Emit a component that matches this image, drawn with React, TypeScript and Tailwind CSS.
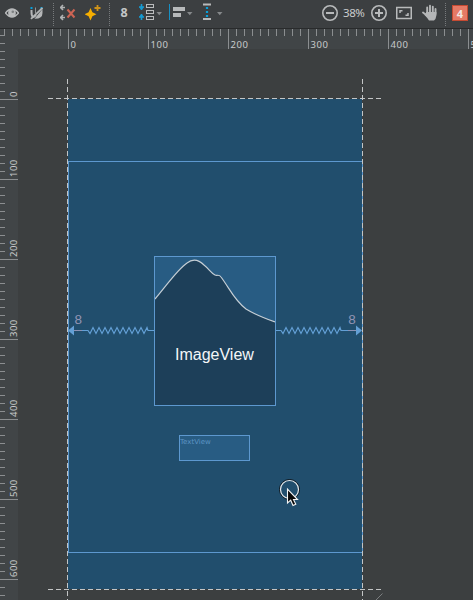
import React from "react";

const TOP_TICKS = Array.from({ length: 59 }, (_, i) => 4 + i * 8);
const LEFT_TICKS = Array.from({ length: 71 }, (_, i) => 2 + i * 8);

function Icon({ w, className = "", children }: { w: number; className?: string; children: React.ReactNode }) {
  return (
    <svg width={w} height={28} viewBox={`0 0 ${w} 28`} fill="none" className={`block shrink-0 ${className}`}>
      {children}
    </svg>
  );
}

function Separator({ className = "" }: { className?: string }) {
  return (
    <Icon w={1} className={className}>
      <path d="M.5 3V26" stroke="#777a7c" strokeDasharray="1 1" />
    </Icon>
  );
}

function Toolbar() {
  return (
    <header className="flex h-[28px] shrink-0 items-start bg-[#3c3f41] pl-[5px]">
      <Icon w={14}>
        <path d="M.5 13Q7 5 13.5 13Q7 21 .5 13Z" stroke="#b8babb" strokeWidth="1.5" />
        <circle cx="7" cy="13" r="3.9" fill="#b8babb" />
        <circle cx="7.8" cy="11.8" r="1.3" fill="#7d8082" />
      </Icon>
      <Icon w={14} className="ml-[11px]">
        <path d="M1.5 7V9M11.5 7V9" stroke="#06a0dc" strokeWidth="2" />
        <path d="M1.5 10V12C1.5 17 3.5 18.5 6 15" stroke="#b4b6b7" strokeWidth="2" />
        <path d="M12.5 9V13Q12.5 19 4.5 18.8Z" fill="#b4b6b7" />
        <path d="M1 18.8L12.5 7.8" stroke="#b4b6b7" strokeWidth="1.8" />
        <path d="M5.5 7.5V14" stroke="#909395" />
      </Icon>
      <Separator className="ml-[9px]" />
      <Icon w={16} className="ml-[6px]">
        <path d="M0 7.5H5M3 5L.7 7.5L3 10M0 17.5H5M3 15L.7 17.5L3 20" stroke="#b0b2b3" strokeWidth="1.6" />
        <path d="M7.5 9.5L14.5 17.5M14.5 9.5L7.5 17.5" stroke="#cc6454" strokeWidth="2" />
      </Icon>
      <Icon w={16} className="ml-[9px]">
        <path d="M5.5 8L7.4 12.3L11.5 14.3L7.4 16.2L5.5 20.5L3.6 16.2L-.5 14.3L3.6 12.3Z" fill="#f6ae00" />
        <path d="M12.5 5V11M9.5 8H15.5" stroke="#ce931a" strokeWidth="1.8" />
      </Icon>
      <Separator className="ml-[8px]" />
      <span className="ml-[10.5px] w-[9.5px] font-['Noto_Sans',sans-serif] text-[12.5px] leading-[26px] font-bold text-[#c4c6c7]">8</span>
      <Icon w={23} className="ml-[9px]">
        <path d="M2.5 4V10M0 7H5M2.5 14V20M0 17H5" stroke="#169bd2" strokeWidth="1.6" />
        <path d="M0 7.3L2.5 10L5 7.3M0 16.7L2.5 14L5 16.7" fill="#169bd2" />
        <rect x="7.5" y="4.5" width="7" height="3" stroke="#babcbd" />
        <rect x="7.5" y="10.5" width="7" height="3" stroke="#babcbd" />
        <rect x="7.5" y="16.5" width="7" height="3" stroke="#babcbd" />
        <path d="M17.5 12H23L20.25 15.3Z" fill="#85888a" />
      </Icon>
      <Icon w={24} className="ml-[7px]">
        <path d="M.5 4V20" stroke="#1690c4" />
        <path d="M4 7H16V11H4ZM4 13H12V17H4Z" fill="#b7b9ba" />
        <path d="M18 12H23.5L20.75 15.3Z" fill="#85888a" />
      </Icon>
      <Icon w={21} className="ml-[10px]">
        <path d="M0 4.5H8M0 19H8" stroke="#b7b9ba" strokeWidth="1.8" />
        <path d="M4 7V9M4 11V13M4 15V17" stroke="#06a0dc" strokeWidth="2.2" />
        <path d="M14 12H19.5L16.75 15.3Z" fill="#85888a" />
      </Icon>
      <div className="flex-1" />
      <Icon w={16}>
        <circle cx="8" cy="13" r="7.2" stroke="#b8babb" strokeWidth="1.6" />
        <path d="M4 13H12" stroke="#b8babb" strokeWidth="2" />
      </Icon>
      <span className="ml-[5px] w-[24px] font-['Noto_Sans',sans-serif] text-[11.5px] leading-[26px] tracking-[-0.45px] whitespace-nowrap text-[#cacccd]">38%</span>
      <Icon w={16} className="ml-[4px]">
        <circle cx="8" cy="13" r="7.2" stroke="#b8babb" strokeWidth="1.6" />
        <path d="M4 13H12M8 9V17" stroke="#b8babb" strokeWidth="2" />
      </Icon>
      <Icon w={16} className="ml-[9px]">
        <rect x=".75" y="7.5" width="14.5" height="11" stroke="#b8babb" strokeWidth="1.5" />
        <path d="M4 13V10.7H6.5M9.5 15.3H12V13" stroke="#b8babb" strokeWidth="1.5" />
      </Icon>
      <Icon w={16} className="ml-[10px]">
        <path d="M1 12.5L5.5 16M5.2 14V7.5M8 13V5.8M10.8 13V6.8M13.5 14V9" stroke="#b4b6b7" strokeWidth="1.9" strokeLinecap="round" />
        <path d="M4.3 12H14.4V15.5Q14 19 12 20.5H7Q6 18.5 2.5 15Z" fill="#b4b6b7" />
      </Icon>
      <Separator className="ml-[7px]" />
      <div className="mt-[5px] mr-[5px] ml-[6px] flex size-[16px] items-center justify-center border border-[#c54a32] bg-[#e57a66] font-['Noto_Sans',sans-serif] text-[11px] leading-none font-bold text-[#f3e8e5]">4</div>
    </header>
  );
}

function TopRuler() {
  return (
    <svg width="473" height="21" className="block shrink-0 overflow-visible bg-[#414547]">
      <rect width="473" height="1" fill="#292b2c" />
      <g fill="#8b8e90">
        {TOP_TICKS.map((x) => (
          <rect key={x} x={x} y={1} width={1} height={x >= 68 && (x - 68) % 80 === 0 ? 20 : 7} />
        ))}
        <rect y="7" width="5" height="1" />
        <rect y="15" width="5" height="1" />
      </g>
      <g fill="#c8cacb" className="font-['Noto_Sans',sans-serif] text-[9.5px] tracking-[0.55px]">
        {["0", "100", "200", "300", "400", "5"].map((n, i) => (
          <text key={n} x={70.5 + i * 80} y={20}>{n}</text>
        ))}
      </g>
    </svg>
  );
}

function LeftRuler() {
  return (
    <svg width="18" height="551" className="block shrink-0 overflow-visible bg-[#414547]">
      <g fill="#8b8e90">
        {LEFT_TICKS.map((y) => (
          <rect key={y} x={0} y={y} width={(y - 50) % 80 === 0 ? 18 : 5} height={1} />
        ))}
      </g>
      <g fill="#c8cacb" className="font-['Noto_Sans',sans-serif] text-[9.5px] tracking-[0.5px]">
        {[0, 100, 200, 300, 400, 500, 600].map((n) => (
          <text key={n} transform={`translate(17 ${48 + n * 0.8}) rotate(-90)`}>{n}</text>
        ))}
      </g>
    </svg>
  );
}

const ZIGZAG = "l2 3l3 -6l3 6l3 -6l3 6l3 -6l3 6l3 -6l3 6l3 -6l3 6l3 -6l3 6l3 -6l3 6l3 -6l3 6l3 -6l3 6l3 -6l1 3";

function Surface() {
  return (
    <main className="relative flex-1 overflow-hidden bg-[#3c3f40]">
      <div className="absolute top-[50px] left-[50px] h-[490px] w-[294px] bg-[#214e6d]" />
      <div className="absolute top-[112px] left-[50px] h-[392px] w-[295px] border border-[#5d98cf]" />
      <div className="absolute top-[207px] left-[136px] h-[150px] w-[122px] border border-[#5d98cf] bg-[#285c83]">
        <svg width="120" height="148" className="block">
          <path
            d="M0 42C12 28 22 13 32 6C37 2 43 2 49 8C54 12 56 16 60 18C62 19 64 17 66 20C75 32 79 43 91 52C99 57 109 61 120 65V148H0Z"
            fill="#1d3f59"
          />
          <path
            d="M0 42C12 28 22 13 32 6C37 2 43 2 49 8C54 12 56 16 60 18C62 19 64 17 66 20C75 32 79 43 91 52C99 57 109 61 120 65"
            fill="none"
            stroke="#c5ced5"
            strokeWidth="1.2"
          />
        </svg>
        <span className="absolute top-[88px] left-[20px] font-['Liberation_Sans',sans-serif] text-[16px] leading-[20px] text-[#f4f6f8]">ImageView</span>
      </div>
      <div className="absolute top-[386px] left-[161px] h-[26px] w-[71px] border border-[#5d98cf] bg-[#285c83]">
        <span className="block pt-[1.5px] font-['DejaVu_Sans',sans-serif] text-[7px] leading-[9px] text-[#5c94c3]">TextView</span>
      </div>
      <svg width="455" height="551" viewBox="18 49 455 551" fill="none" className="absolute inset-0">
        <g stroke="#c3c5c6" strokeDasharray="5 3">
          <path d="M67.5 79V600" />
          <path d="M362.5 79V600" />
          <path d="M48 98.5H381" />
          <path d="M48 589.5H381" />
        </g>
        <path d="M376 600L382.5 593.5" stroke="#7b7e80" />
        <g stroke="#639fd5" strokeWidth="1.2">
          <path d={`M74 330.5H88${ZIGZAG}H154`} />
          <path d={`M276 330.5H281${ZIGZAG}H356`} />
        </g>
        <path d="M68 330.5L74 325.5V335.5ZM362 330.5L356 325.5V335.5Z" fill="#639fd5" />
        <path d="M74 330.5H82M348 330.5H356" stroke="#8b92b6" />
        <g fill="#9294b4" className="font-['Liberation_Sans',sans-serif] text-[13.5px]">
          <text x="74.5" y="324">8</text>
          <text x="348.3" y="324">8</text>
        </g>
        <circle cx="289.5" cy="489.5" r="10" stroke="#10171d" />
        <circle cx="289.5" cy="489.5" r="9" stroke="#e6e9eb" strokeWidth="1.2" />
        <path d="M287.5 489V503L290.7 500.2L293 505.5L295.8 504.2L293.5 499.5H297.5Z" fill="#090909" stroke="#f5f5f5" strokeWidth="1.1" />
      </svg>
    </main>
  );
}

export default function App() {
  return (
    <div className="flex h-[600px] w-[473px] flex-col overflow-hidden bg-[#3c3f41]">
      <Toolbar />
      <TopRuler />
      <div className="flex min-h-0 flex-1">
        <LeftRuler />
        <Surface />
      </div>
    </div>
  );
}
